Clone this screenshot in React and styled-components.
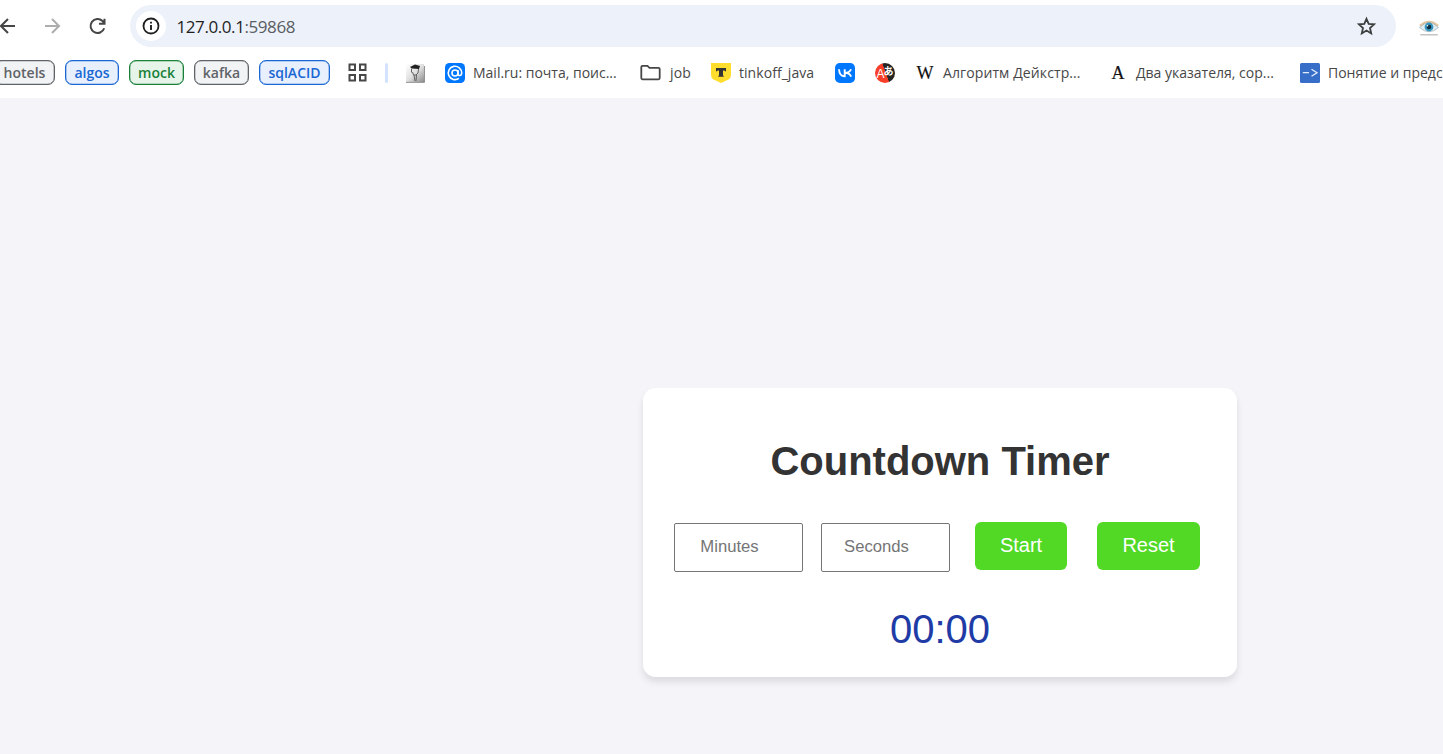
import React from 'react';
import styled, { createGlobalStyle } from 'styled-components';

const GlobalStyle = createGlobalStyle`
  *, *::before, *::after { box-sizing: border-box; }
  body {
    margin: 0;
    background: #f4f4f9;
    overflow: hidden;
    font-family: "Liberation Sans", Arial, sans-serif;
  }
`;

const Window = styled.div`
  width: 1443px;
  height: 754px;
  display: flex;
  flex-direction: column;
  overflow: hidden;
`;

const Chrome = styled.header`
  flex: none;
  height: 98px;
  background: #fff;
  font-family: "Open Sans", "Noto Sans", sans-serif;
`;

const NavBar = styled.div`
  height: 52px;
  display: flex;
  align-items: center;
`;

const NavButtons = styled.div`
  width: 130px;
  flex: none;
  display: flex;
  gap: 21px;
  padding-bottom: 1px;
  svg { flex: none; display: block; }
  svg:first-child { margin-left: -5px; }
`;

const AddressBar = styled.div`
  width: 1266px;
  height: 42px;
  flex: none;
  display: flex;
  align-items: center;
  padding: 0 17px 0 6px;
  border-radius: 21px;
  background: #ecf1fa;
`;

const SiteInfo = styled.span`
  width: 30px;
  height: 30px;
  flex: none;
  display: flex;
  align-items: center;
  justify-content: center;
  border-radius: 50%;
  background: #fff;
`;

const Url = styled.span`
  flex: 1;
  margin-left: 10.5px;
  font-size: 17px;
  letter-spacing: -0.42px;
  color: #1f1f1f;
  span { color: #5a5d61; }
`;

const Extension = styled.div`
  margin: 4px 0 0 23px;
  height: 20px;
`;

const Bookmarks = styled.div`
  height: 42px;
  display: flex;
  align-items: center;
  white-space: nowrap;
`;

const tones = {
  grey: ['#5f6368', '#f1f3f4'],
  blue: ['#1967d2', '#e8f0fe'],
  green: ['#188038', '#e6f4ea'],
};

const Group = styled.span`
  width: ${(p) => p.$w}px;
  height: 25px;
  flex: none;
  display: flex;
  align-items: center;
  justify-content: center;
  margin: 0 10px 2px 0;
  border: 1px solid ${(p) => tones[p.$tone][0]};
  border-radius: 7px;
  background: ${(p) => tones[p.$tone][1]};
  box-shadow: inset 0 0 0 0.3px ${(p) => tones[p.$tone][0]};
  color: ${(p) => tones[p.$tone][0]};
  font-size: 14px;
  font-weight: 600;
  &:first-child { margin-left: -6px; }
`;

const AppsButton = styled.span`
  width: 27px;
  height: 24px;
  flex: none;
  display: flex;
  align-items: center;
  justify-content: flex-end;
  padding-bottom: 1px;
`;

const Divider = styled.span`
  width: 3px;
  height: 20px;
  flex: none;
  margin: 0 17px 0 18px;
  border-radius: 2px;
  background: #d3e3fd;
`;

const Bookmark = styled.span`
  width: ${(p) => p.$w}px;
  height: 24px;
  flex: none;
  display: flex;
  align-items: center;
  gap: 8px;
  color: #474747;
  svg { flex: none; display: block; }
`;

const Label = styled.span`
  font-size: 14px;
  line-height: 20px;
  letter-spacing: ${(p) => p.$ls || 0}px;
`;

const Page = styled.main`
  flex: 1;
  display: flex;
  align-items: flex-start;
  padding: 290px 0 0 643px;
`;

const Card = styled.section`
  width: 594px;
  height: 289px;
  display: flex;
  flex-direction: column;
  align-items: center;
  padding-top: 50px;
  border-radius: 12.5px;
  background: #fff;
  box-shadow: 0 5px 7.5px rgba(0, 0, 0, 0.1);
`;

const Title = styled.h1`
  margin: 0;
  font-size: 40px;
  line-height: 46px;
  font-weight: 700;
  color: #333;
`;

const Controls = styled.div`
  align-self: stretch;
  display: flex;
  align-items: flex-start;
  margin-top: 38px;
  padding-left: 31px;
`;

const TimeInput = styled.input`
  width: 129px;
  height: 49px;
  margin: 1px 18px 0 0;
  padding: 0 18px 2px 0;
  border: 1px solid #767676;
  border-radius: 2px;
  background: #fff;
  font-family: inherit;
  font-size: 16.67px;
  text-align: center;
  &::placeholder { color: #757575; opacity: 1; }
`;

const ActionButton = styled.button`
  width: ${(p) => p.$w}px;
  height: 48px;
  margin: 0 23px 0 7px;
  padding: 0 0 2px;
  border: 0;
  border-radius: 6px;
  background: #51d926;
  color: #fff;
  font-family: inherit;
  font-size: 20px;
`;

const Clock = styled.div`
  margin-top: 34px;
  font-size: 40px;
  line-height: 46px;
  color: #203ba5;
`;

const BackIcon = () => (
  <svg width="24" height="24" viewBox="0 0 24 24" fill="none" stroke="#444746" strokeWidth="2">
    <path d="M20 12H6M13 5l-7 7 7 7" />
  </svg>
);

const ForwardIcon = () => (
  <svg width="24" height="24" viewBox="0 0 24 24" fill="none" stroke="#adadad" strokeWidth="2">
    <path d="M5 12h14M12 5l7 7-7 7" />
  </svg>
);

const ReloadIcon = () => (
  <svg width="24" height="24" viewBox="0 0 24 24" fill="none" stroke="#444746" strokeWidth="2">
    <path d="M19.2 14.2A7 7 0 1 1 17.5 7l2 2.3M19.5 4.8v5h-5.5" />
  </svg>
);

const InfoIcon = () => (
  <svg width="18" height="18" viewBox="0 0 18 18">
    <circle cx="9" cy="9" r="7.5" fill="none" stroke="#1f1f1f" strokeWidth="1.8" />
    <path d="M9 8v5M9 4.7v1.9" stroke="#1f1f1f" strokeWidth="1.9" />
  </svg>
);

const StarIcon = () => (
  <svg width="24" height="24" viewBox="0 0 24 24" fill="none" stroke="#3c3f3e" strokeWidth="1.8">
    <path d="m11.5 4.8 2.2 5 5.4.5-4.1 3.7 1.2 5.4-4.7-2.8-4.7 2.8L8 14l-4.1-3.7 5.4-.5z" />
  </svg>
);

const EyeIcon = () => (
  <svg width="20" height="20" viewBox="0 0 20 20">
    <path d="M1 8Q10 0 19 8" fill="none" stroke="#e3c39c" strokeWidth="2.4" />
    <path d="M.5 9.5Q10 0 19.5 9.500 10 18 .5 9.500z" fill="#e1edf2" stroke="#9caeb7" strokeWidth=".7" />
    <circle cx="10" cy="9" r="4.4" fill="#3796bd" />
    <circle cx="10" cy="9" r="2.3" fill="#132b3b" />
    <circle cx="8.5" cy="7.700" r=".8" fill="#fff" />
    <rect x="1" y="16" width="18" height="1.6" rx=".8" fill="#c4c4c4" />
  </svg>
);

const AppsIcon = () => (
  <svg width="19" height="19" viewBox="0 0 19 19" fill="none" stroke="#474747" strokeWidth="2">
    <path d="M1.500 1.500H7V7H1.500zM12 1.500h5.500V7H12zM1.500 12H7v5.500H1.500zM12 12h5.500v5.500H12z" />
  </svg>
);

const SketchIcon = () => (
  <svg width="20" height="20" viewBox="0 0 20 20">
    <defs>
      <linearGradient id="sketch" x1="0" y1="0" x2="1" y2="1">
        <stop offset="0" stopColor="#fff" />
        <stop offset=".5" stopColor="#e0e0e0" />
        <stop offset="1" stopColor="#8c8c8c" />
      </linearGradient>
    </defs>
    <path d="M1 1h18v18H1z" fill="url(#sketch)" />
    <path d="M1 19.4h18.5V3" fill="none" stroke="#777" strokeWidth=".8" />
    <path d="M5 4 10 1.5l5 1.5-1 3-7-.5z" fill="#222" />
    <path d="M6.500 5.500v4M13.500 6l-.5 4-2 2H8.500L7.500 9M9 12l1 6M11.500 12l-.5 6" fill="none" stroke="#555" strokeWidth=".9" />
  </svg>
);

const MailIcon = () => (
  <svg width="20" height="20" viewBox="0 0 20 20">
    <rect width="20" height="20" rx="4.5" fill="#07f" />
    <circle cx="10" cy="10" r="3" fill="none" stroke="#fff" strokeWidth="1.6" />
    <path d="M13 7v3.7c0 2.5 3.7 2.4 3.7-.7a6.7 6.7 0 1 0-2.8 5.4" fill="none" stroke="#fff" strokeWidth="1.6" />
  </svg>
);

const FolderIcon = () => (
  <svg width="22" height="20" viewBox="0 0 22 20" fill="none" stroke="#474747" strokeWidth="1.8">
    <path d="M2.5 2.800h5l2 2h9q1.200 0 1.200 1.200v9.100q0 1.200-1.200 1.200h-16q-1.200 0-1.200-1.200V4q0-1.200 1.200-1.200z" />
  </svg>
);

const ShieldIcon = () => (
  <svg width="20" height="20" viewBox="0 0 20 20">
    <path d="M0 0h20v12q0 3-2.5 4.5L10 20l-7.5-3.5Q0 15 0 12z" fill="#ffdd2d" />
    <path d="M5 5h10v3.7q-.8-1.1-3-1.1v4.6l1 1.5H7l1-1.5V7.6q-2.2 0-3 1.1z" fill="#333" />
  </svg>
);

const VkIcon = () => (
  <svg width="20" height="20" viewBox="0 0 20 20">
    <rect width="20" height="20" rx="4.8" fill="#07f" />
    <path d="M4 6.3c.3 4.5 2.3 7.1 5.7 7.1V6.300M16 6.300c-.8 2.200-2.500 3.500-6 3.500 3.700 0 5 1.500 6.200 3.800" fill="none" stroke="#fff" strokeWidth="1.9" />
  </svg>
);

const TranslateBadge = styled.span`
  width: 20px;
  height: 20px;
  display: flex;
  align-items: center;
  justify-content: center;
  border-radius: 50%;
  background: linear-gradient(70deg, #f63e28 52%, #252525 54%);
  color: #fff;
  font: 12px/20px "Liberation Sans", sans-serif;
  padding-top: 2px;
  span {
    font: 700 10px/12px "Noto Sans CJK JP", sans-serif;
    margin: -6px 0 0 -1px;
  }
`;

const Letter = styled.span`
  width: 20px;
  flex: none;
  text-align: center;
  color: #111;
  font: 18px/20px "Liberation Serif", serif;
  -webkit-text-stroke: 0.2px #111;
`;

const ArrowIcon = () => (
  <svg width="20" height="20" viewBox="0 0 20 20">
    <rect width="20" height="20" rx="1.5" fill="#376fc8" />
    <path d="M2.8 9.7h6.2M11.5 6.2l5.5 3.5-5.5 3.5" fill="none" stroke="#e3edff" strokeWidth="1.3" />
  </svg>
);

export default function App() {
  return (
    <Window>
      <GlobalStyle />
      <Chrome>
        <NavBar>
          <NavButtons><BackIcon /><ForwardIcon /><ReloadIcon /></NavButtons>
          <AddressBar>
            <SiteInfo><InfoIcon /></SiteInfo>
            <Url>127.0.0.1<span>:59868</span></Url>
            <StarIcon />
          </AddressBar>
          <Extension><EyeIcon /></Extension>
        </NavBar>
        <Bookmarks>
          <Group $tone="grey" $w={61}>hotels</Group>
          <Group $tone="blue" $w={54}>algos</Group>
          <Group $tone="green" $w={55}>mock</Group>
          <Group $tone="grey" $w={55}>kafka</Group>
          <Group $tone="blue" $w={71}>sqlACID</Group>
          <AppsButton><AppsIcon /></AppsButton>
          <Divider />
          <Bookmark $w={40}><SketchIcon /></Bookmark>
          <Bookmark $w={195}><MailIcon /><Label>Mail.ru: почта, поис...</Label></Bookmark>
          <Bookmark $w={71}><FolderIcon /><Label $ls={0.1}>job</Label></Bookmark>
          <Bookmark $w={124}><ShieldIcon /><Label $ls={0.05}>tinkoff_java</Label></Bookmark>
          <Bookmark $w={40}><VkIcon /></Bookmark>
          <Bookmark $w={40}><TranslateBadge>A<span>あ</span></TranslateBadge></Bookmark>
          <Bookmark $w={193}><Letter>W</Letter><Label $ls={0.1}>Алгоритм Дейкстр...</Label></Bookmark>
          <Bookmark $w={192}><Letter>A</Letter><Label>Два указателя, сор...</Label></Bookmark>
          <Bookmark $w={143}><ArrowIcon /><Label>Понятие и предс</Label></Bookmark>
        </Bookmarks>
      </Chrome>
      <Page>
        <Card>
          <Title>Countdown Timer</Title>
          <Controls>
            <TimeInput placeholder="Minutes" />
            <TimeInput placeholder="Seconds" />
            <ActionButton $w={92}>Start</ActionButton>
            <ActionButton $w={103}>Reset</ActionButton>
          </Controls>
          <Clock>00:00</Clock>
        </Card>
      </Page>
    </Window>
  );
}
